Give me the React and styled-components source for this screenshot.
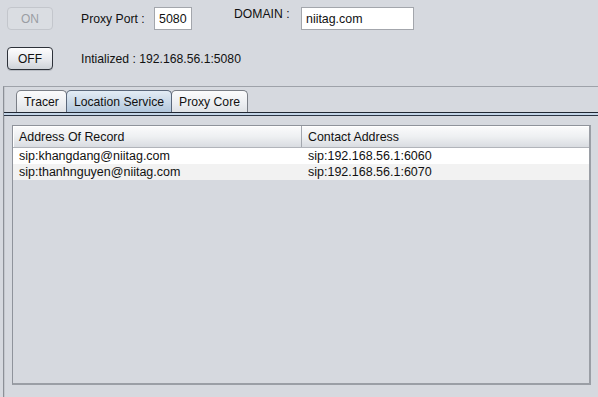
import styled, { createGlobalStyle } from "styled-components";

const Global = createGlobalStyle`
  body {
    margin: 0;
    background: #d6d9df;
    font-family: "Liberation Sans", Arial, sans-serif;
    font-size: 12px;
    color: #111;
  }
`;

const rows = [
  { aor: "sip:khangdang@niitag.com", contact: "sip:192.168.56.1:6060" },
  { aor: "sip:thanhnguyen@niitag.com", contact: "sip:192.168.56.1:6070" },
];

const App = () => {
  return (
    <Frame>
      <Global />
      <Top>
        <Row>
          <Button disabled>ON</Button>
          <Label style={{ width: 73 }}>Proxy Port :</Label>
          <Field $w={38} defaultValue="5080" />
          <Label $raise style={{ width: 67, marginLeft: 42 }}>DOMAIN :</Label>
          <Field $w={113} defaultValue="niitag.com" />
        </Row>
        <Row $second>
          <Button>OFF</Button>
          <Label>Intialized : 192.168.56.1:5080</Label>
        </Row>
      </Top>
      <TabPanel>
        <Tabs>
          <Tab $w={51}>Tracer</Tab>
          <Tab $w={106} $active>Location Service</Tab>
          <Tab $w={77}>Proxy Core</Tab>
        </Tabs>
        <TabLine />
        <Pane>
          <Header>
            <HeadCell $w={289}>Address Of Record</HeadCell>
            <HeadCell>Contact Address</HeadCell>
          </Header>
          {rows.map((r, i) => (
            <BodyRow key={r.aor} $odd={i % 2 === 1}>
              <Cell $w={289}>{r.aor}</Cell>
              <Cell>{r.contact}</Cell>
            </BodyRow>
          ))}
        </Pane>
      </TabPanel>
    </Frame>
  );
};

const Frame = styled.div`
  width: 598px;
  height: 397px;
  overflow: hidden;
`;

const Top = styled.div`
  padding: 7px 0 0 7px;
`;

const Row = styled.div`
  display: flex;
  align-items: center;
  height: 23px;
  margin-top: ${(p) => (p.$second ? "17px" : "0")};
`;

const Button = styled.button`
  width: 46px;
  height: 23px;
  margin: 0 28px 0 0;
  padding: 0;
  border-radius: 4px;
  font-family: inherit;
  font-size: 12px;
  border: 1px solid #2e323a;
  color: #111;
  background: linear-gradient(#fdfdfe, #e8eaee 55%, #cfd3d9);
  box-shadow: 0 1px 0 #b8bcc3;
  &:disabled {
    border-color: #c3c6cc;
    color: #9a9da4;
    background: #dadde2;
    box-shadow: none;
  }
`;

const Label = styled.span`
  display: inline-block;
  white-space: nowrap;
  font-size: 12.2px;
  align-self: ${(p) => (p.$raise ? "flex-start" : "center")};
  line-height: ${(p) => (p.$raise ? "14px" : "normal")};
`;

const Field = styled.input`
  box-sizing: border-box;
  width: ${(p) => p.$w}px;
  height: 23px;
  border: 1px solid #a3a6ac;
  background: #fff;
  padding: 0 4px;
  font-family: inherit;
  font-size: 12.4px;
  color: #111;
  outline: none;
`;

const TabPanel = styled.div`
  margin: 16px 0 0 3px;
  border-top: 1px solid #9ea2a9;
  border-left: 1px solid #8c9097;
  box-shadow: inset 1px 0 0 #c4c7cd;
  height: 320px;
`;

const Tabs = styled.div`
  display: flex;
  padding: 3px 0 0 12px;
  height: 22px;
`;

const Tab = styled.div`
  box-sizing: border-box;
  width: ${(p) => p.$w}px;
  height: 22px;
  margin-right: -1px;
  display: flex;
  align-items: center;
  justify-content: center;
  font-size: 12.2px;
  border: 1px solid ${(p) => (p.$active ? "#5a677a" : "#7a7e86")};
  border-bottom: none;
  border-radius: 5px 5px 0 0;
  background: ${(p) =>
    p.$active
      ? "linear-gradient(#e3ecf5, #c6d6e6 60%, #b3c7dc)"
      : "linear-gradient(#fbfbfc, #eceef1 60%, #dfe2e6)"};
  position: relative;
  z-index: ${(p) => (p.$active ? 1 : 0)};
`;

const TabLine = styled.div`
  height: 1px;
  background: #1f2632;
  border-bottom: 2px solid #c3d4e6;
  box-shadow: 0 1px 0 #2c3544;
`;

const Pane = styled.div`
  box-sizing: border-box;
  margin: 10px 7px 0 8px;
  height: 260px;
  border: 1px solid #8f939b;
  border-right-width: 2px;
  border-bottom-width: 2px;
  border-right-color: #9a9ea5;
  border-bottom-color: #9a9ea5;
`;

const Header = styled.div`
  display: flex;
  height: 21px;
  background: linear-gradient(#fbfbfc, #eef0f2 50%, #d9dce1);
  border-bottom: 1px solid #b1b4ba;
  box-shadow: inset 1px 1px 0 #ffffff;
`;

const HeadCell = styled.div`
  box-sizing: border-box;
  flex: ${(p) => (p.$w ? `0 0 ${p.$w}px` : "1")};
  display: flex;
  align-items: center;
  padding-left: 6px;
  font-size: 12.4px;
  border-right: ${(p) => (p.$w ? "1px solid #a3a7ae" : "none")};
`;

const BodyRow = styled.div`
  display: flex;
  height: 16px;
  background: ${(p) => (p.$odd ? "#f2f2f2" : "#ffffff")};
`;

const Cell = styled.div`
  box-sizing: border-box;
  flex: ${(p) => (p.$w ? `0 0 ${p.$w}px` : "1")};
  display: flex;
  align-items: center;
  padding-left: 6px;
  font-size: 12.5px;
  white-space: nowrap;
`;

export default App;
